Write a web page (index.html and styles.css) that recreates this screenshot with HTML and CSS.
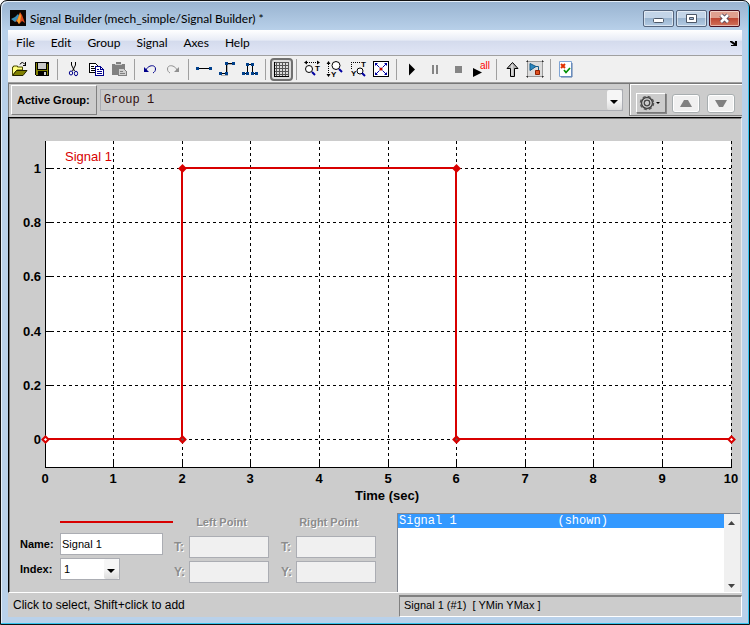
FILE: index.html
```html
<!DOCTYPE html>
<html lang="en">
<head>
    <meta charset="UTF-8">
    <meta name="viewport" content="width=device-width, initial-scale=1.0">
    <title>Signal Builder</title>
    <link rel="stylesheet" href="styles.css">
</head>
<body>
    <div class="window">
        <header class="titlebar">
            <svg class="app-icon" width="16" height="16" viewBox="0 0 16 16">
                <rect width="16" height="16" fill="#0a0604"/>
                <path d="M1 9l4-2 3-3 2 3-3 4-2 1z" fill="#3c8fb8"/>
                <path d="M5 12l3-4 2-6 2 3 3 8-3-2-3 3-2-3z" fill="#d8471a"/>
                <path d="M7 11l3-8 1 3-1 6-1 2z" fill="#f6a42c"/>
            </svg>
            <h1>Signal Builder (mech_simple/Signal Builder) *</h1>
            <div class="window-buttons">
                <button aria-label="Minimize"><svg width="29" height="15" viewBox="0 0 29 15"><rect x="9.500" y="7.500" width="10" height="4" rx="1" fill="#fff" stroke="#4c5767"/></svg></button>
                <button aria-label="Maximize"><svg width="29" height="15" viewBox="0 0 29 15"><path d="M9.500 3.500h10v8h-10z" fill="#fff" stroke="#4c5767"/><path d="M12.500 6.500h4v2h-4z" fill="#9fb9d5" stroke="#4c5767"/></svg></button>
                <button class="close" aria-label="Close"><svg width="29" height="15" viewBox="0 0 29 15"><path d="M11 4l7 7M18 4l-7 7" stroke="#564a5c" stroke-width="4.500"/><path d="M11 4l7 7M18 4l-7 7" stroke="#fff" stroke-width="2.600"/></svg></button>
            </div>
        </header>

        <nav class="menubar">
            <button>File</button>
            <button>Edit</button>
            <button>Group</button>
            <button>Signal</button>
            <button>Axes</button>
            <button>Help</button>
            <svg class="dock" width="7" height="6" viewBox="0 0 7 6"><path d="M0 1h2l3 2V1h2v5H1V5h3L0 2z" fill="#000"/></svg>
        </nav>

        <div class="toolbar">
            <button aria-label="Open">
                <svg viewBox="0 0 17 17">
                    <path d="M1.500 14V6h1V5h4v1h5v3H6l-4 5z" fill="#ffff80" stroke="#4b4b00"/>
                    <path d="M5.500 9.500H16l-4 5H1.500z" fill="#808000" stroke="#222200"/>
                    <path d="M9 3.500q2-4 5 0M14.500 1v3.500M12 4.500h3" fill="none" stroke="#000"/>
                </svg>
            </button>
            <button aria-label="Save">
                <svg viewBox="0 0 17 17" shape-rendering="crispEdges">
                    <path d="M1 1h14v14H2L1 14z" fill="#000"/>
                    <path d="M2 2h1v7h10V3h1v11H2z" fill="#808000"/>
                    <rect x="4" y="2" width="8" height="6" fill="#c8c8c8"/>
                    <rect x="4" y="10" width="9" height="4" fill="#000"/>
                    <rect x="10" y="11" width="2" height="3" fill="#d0d0d0"/>
                </svg>
            </button>
            <span class="sep"></span>
            <button aria-label="Cut">
                <svg viewBox="0 0 17 17">
                    <path d="M6.500 1v3l3 6M10.500 1v3l-3 6" fill="none" stroke="#000"/>
                    <ellipse cx="6" cy="12" rx="1.700" ry="2" fill="none" stroke="#00008b"/>
                    <ellipse cx="11" cy="12.500" rx="1.600" ry="2.300" fill="none" stroke="#00008b"/>
                </svg>
            </button>
            <button aria-label="Copy">
                <svg viewBox="0 0 17 17" shape-rendering="crispEdges">
                    <path d="M1.500 2.500h6l2 2v7h-8z" fill="#fff" stroke="#000"/>
                    <path d="M3 5.500h3M3 7.500h4M3 9.500h4" stroke="#000"/>
                    <path d="M7.500 5.500h5l3 3v6h-8z" fill="#fff" stroke="#00008b"/>
                    <path d="M12.500 5v3.500H16M9 8.500h2M9 10.500h5M9 12.500h5" fill="none" stroke="#00008b"/>
                </svg>
            </button>
            <button aria-label="Paste" disabled>
                <svg viewBox="0 0 17 17" shape-rendering="crispEdges">
                    <path d="M1 3h4V1h5v2h4v11H1z" fill="#808080"/>
                    <path d="M4 3.500h7" stroke="#c8c8c8"/>
                    <path d="M7.500 7.500h5l3 3v4h-8z" fill="#d0d0d0" stroke="#808080"/>
                    <path d="M9 10.500h3M9 12.500h5" stroke="#808080"/>
                </svg>
            </button>
            <span class="sep"></span>
            <button aria-label="Undo">
                <svg viewBox="0 0 17 17">
                    <path d="M4 9c2-5 9.500-6 9.500-1 0 2-1 3-2.500 4" fill="none" stroke="#00008b"/>
                    <path d="M2 6v5h5z" fill="#00008b"/>
                </svg>
            </button>
            <button aria-label="Redo" disabled>
                <svg viewBox="0 0 17 17">
                    <path d="M12 9C10 4 2.500 3 2.500 8c0 2 1 3 2.500 4" fill="none" stroke="#909090"/>
                    <path d="M14 6v5H9z" fill="#909090"/>
                </svg>
            </button>
            <span class="sep"></span>
            <button aria-label="Constant signal">
                <svg viewBox="0 0 17 17" shape-rendering="crispEdges">
                    <path d="M2 7.500h13" stroke="#000"/>
                    <path d="M0 6h3v3H0zM13 6h3v3h-3z" fill="#00408c"/>
                </svg>
            </button>
            <button aria-label="Step signal">
                <svg viewBox="0 0 17 17" shape-rendering="crispEdges">
                    <path d="M2 13.500h6.500v-11H15" transform="translate(0 1)" stroke="#b0b0b0" fill="none"/>
                    <path d="M2 12.500h5.500v-10H15" stroke="#000" fill="none"/>
                    <path d="M0 11h3v3H0zM6 11h3v3H6zM6 1h3v3H6zM13 1h3v3h-3z" fill="#00408c"/>
                </svg>
            </button>
            <button aria-label="Pulse signal">
                <svg viewBox="0 0 17 17" shape-rendering="crispEdges">
                    <path d="M1 12.500h4.500v-9h5v9H15" stroke="#000" fill="none"/>
                    <path d="M0 11h3v3H0zM4 11h3v3H4zM4 2h3v3H4zM9 2h3v3H9zM9 11h3v3H9zM13 11h3v3h-3z" fill="#00408c"/>
                </svg>
            </button>
            <span class="sep"></span>
            <button class="pressed" aria-label="Grid" aria-pressed="true">
                <svg viewBox="0 0 17 17" shape-rendering="crispEdges">
                    <path d="M1 1.500h15M1 4.500h15M1 7.500h15M1 10.500h15M1 13.500h15M3.500 1v14M6.500 1v14M9.500 1v14M12.500 1v14M15.500 1v14" stroke="#555"/>
                    <path d="M1.500 1v15M1 15.500h15" stroke="#000"/>
                </svg>
            </button>
            <span class="sep"></span>
            <button aria-label="Zoom T">
                <svg viewBox="0 0 17 17">
                    <path d="M3 1.500h10" stroke="#000" stroke-dasharray="1 1"/>
                    <path d="M0 1.500l3-2v4zM16 1.500l-3-2v4z" fill="#000"/>
                    <circle cx="5" cy="8" r="3.500" fill="#fff" stroke="#000"/>
                    <path d="M8 11l3 3" stroke="#0000a0" stroke-width="2"/>
                    <text x="11" y="10" class="axis-letter">T</text>
                </svg>
            </button>
            <button aria-label="Zoom Y">
                <svg viewBox="0 0 17 17">
                    <path d="M1.500 3v10" stroke="#000" stroke-dasharray="1 1"/>
                    <path d="M1.500 0l-2 3h4zM1.500 16l-2-3h4z" fill="#000"/>
                    <circle cx="9" cy="4.500" r="4" fill="#fff" stroke="#000"/>
                    <path d="M12 8l3 3" stroke="#0000a0" stroke-width="2"/>
                    <text x="4" y="16" class="axis-letter">Y</text>
                </svg>
            </button>
            <button aria-label="Zoom T and Y">
                <svg viewBox="0 0 17 17">
                    <path d="M1 1.500h10M1.500 1v8" stroke="#000" stroke-dasharray="1 1" fill="none"/>
                    <circle cx="10" cy="10" r="3" fill="#fff" stroke="#000"/>
                    <path d="M12 12l3 3" stroke="#0000a0" stroke-width="2"/>
                    <text x="11" y="6" class="axis-letter">T</text>
                    <text x="1" y="15" class="axis-letter">Y</text>
                </svg>
            </button>
            <button aria-label="Fit view">
                <svg viewBox="0 0 17 17">
                    <path d="M.5.5h15v15H.5z" fill="#fff" stroke="#000" shape-rendering="crispEdges"/>
                    <path d="M3 3l3.500 3.500M13 3L9.500 6.500M3 13l3.500-3.500M13 13L9.500 9.500" stroke="#0000a0"/>
                    <path d="M2 2h3L2 5zM14 2v3l-3-3zM2 14v-3l3 3zM14 14h-3l3-3z" fill="#0000a0"/>
                    <circle cx="8" cy="8" r="1.600" fill="#c00000"/>
                </svg>
            </button>
            <span class="sep"></span>
            <button aria-label="Start">
                <svg viewBox="0 0 17 17"><path d="M5 2.500l6 6-6 6z" fill="#000"/></svg>
            </button>
            <button aria-label="Pause" disabled>
                <svg viewBox="0 0 17 17"><path d="M5 4h2v9H5zM9 4h2v9H9z" fill="#858585"/></svg>
            </button>
            <button aria-label="Stop" disabled>
                <svg viewBox="0 0 17 17"><path d="M5 5h7v7H5z" fill="#858585"/></svg>
            </button>
            <button aria-label="Run all">
                <svg viewBox="0 0 17 17">
                    <path d="M0 7l9 4.500L0 16z" fill="#000"/>
                    <text x="7" y="8" class="all-text">all</text>
                </svg>
            </button>
            <span class="sep"></span>
            <button aria-label="Up to parent">
                <svg viewBox="0 0 17 17">
                    <path d="M8.500 1.500l5.500 6h-3.500v8h-4v-8H3z" fill="#b8b8b8" stroke="#000"/>
                    <path d="M8 3.500v11" stroke="#f4f4f4"/>
                </svg>
            </button>
            <button aria-label="Simulink model">
                <svg viewBox="0 0 17 17">
                    <path d="M.5.5h15v15H.5z" fill="#dcdcdc" stroke="#999"/>
                    <path d="M0 1V0h1M15 0h1v1M0 15v1h1M15 16h1v-1" stroke="#000" fill="none"/>
                    <path d="M3 2.500l6 3-6 4z" fill="#2a87c0" stroke="#145a88"/>
                    <path d="M9 5.500h2.500V9" stroke="#145a88" fill="none"/>
                    <path d="M8.500 9.500h4v4h-4z" fill="#e05020" stroke="#902000"/>
                </svg>
            </button>
            <span class="sep"></span>
            <button aria-label="Verification settings">
                <svg viewBox="0 0 17 17">
                    <path d="M1.500.5h12v15h-12z" fill="#fff" stroke="#7fa4d4"/>
                    <path d="M14 2v14H3" stroke="#5577a8" fill="none"/>
                    <path d="M3 3l4 4M7 3L3 7" stroke="#e03000" stroke-width="2"/>
                    <path d="M6 9l2 2.500L12 7" stroke="#009000" stroke-width="1.700" fill="none"/>
                </svg>
            </button>
        </div>

        <div class="groupbar">
            <label class="group-label" for="group">Active Group:</label>
            <div class="combo group-combo">
                <select id="group"><option>Group 1</option></select>
            </div>
            <div class="group-tools">
                <button class="gear" aria-label="Group options">
                    <svg width="26" height="18" viewBox="0 0 26 18">
                        <circle cx="10" cy="9" r="5.500" fill="#ddd" stroke="#444" stroke-width="1.500"/>
                        <circle cx="10" cy="9" r="6.500" fill="none" stroke="#555" stroke-width="1.500" stroke-dasharray="3 2.100"/>
                        <circle cx="10" cy="9" r="2.800" fill="#ccc" stroke="#444" stroke-width="1.300"/>
                        <path d="M19 8h4l-2 2z" fill="#000"/>
                    </svg>
                </button>
                <button class="move" aria-label="Move group up" disabled><svg width="12" height="7" viewBox="0 0 12 7"><path d="M4 0h4l4 7H0z" fill="#808080"/></svg></button>
                <button class="move" aria-label="Move group down" disabled><svg width="12" height="7" viewBox="0 0 12 7"><path d="M0 0h12L8 7H4z" fill="#808080"/></svg></button>
            </div>
        </div>

        <main class="workspace">
            <svg class="chart" viewBox="0 0 730 394" role="img" aria-label="Signal 1 over time">
                <rect x="35" y="22" width="686" height="326" fill="#fff"/>
                <g class="grid">
                    <path d="M103.500 22v326M172.500 22v326M240.500 22v326M309.500 22v326M378.500 22v326M446.500 22v326M515.500 22v326M583.500 22v326M652.500 22v326M721.500 22v326"/>
                    <path d="M35 49.500h686M35 103.500h686M35 157.500h686M35 212.500h686M35 266.500h686M35 320.500h686"/>
                </g>
                <g class="axes">
                    <path d="M35.500 22v326.500H722"/>
                    <path d="M103.500 348v-7M172.500 348v-7M240.500 348v-7M309.500 348v-7M378.500 348v-7M446.500 348v-7M515.500 348v-7M583.500 348v-7M652.500 348v-7M721.500 348v-7"/>
                    <path d="M35 49.500h7M35 103.500h7M35 157.500h7M35 212.500h7M35 266.500h7M35 320.500h7"/>
                </g>
                <path class="signal" d="M35 320h137V49h274v271h275"/>
                <g class="points">
                    <path d="M35.500 317.500l3 3-3 3-3-3z" fill="#fff"/>
                    <path d="M172.500 317.500l3 3-3 3-3-3z" fill="#844"/>
                    <path d="M172.500 46.500l3 3-3 3-3-3z" fill="#d80000"/>
                    <path d="M446.500 46.500l3 3-3 3-3-3z" fill="#d80000"/>
                    <path d="M446.500 317.500l3 3-3 3-3-3z" fill="#844"/>
                    <path d="M721.500 317.500l3 3-3 3-3-3z" fill="#fff"/>
                </g>
                <text class="signal-name" x="55" y="42">Signal 1</text>
                <g class="ticks-y">
                    <text x="31" y="54">1</text>
                    <text x="31" y="108">0.8</text>
                    <text x="31" y="162">0.6</text>
                    <text x="31" y="217">0.4</text>
                    <text x="31" y="271">0.2</text>
                    <text x="31" y="325">0</text>
                </g>
                <g class="ticks-x">
                    <text x="35" y="364">0</text>
                    <text x="103" y="364">1</text>
                    <text x="172" y="364">2</text>
                    <text x="240" y="364">3</text>
                    <text x="309" y="364">4</text>
                    <text x="378" y="364">5</text>
                    <text x="446" y="364">6</text>
                    <text x="515" y="364">7</text>
                    <text x="583" y="364">8</text>
                    <text x="652" y="364">9</text>
                    <text x="721" y="364">10</text>
                    <text x="377" y="381">Time (sec)</text>
                </g>
            </svg>

            <div class="editor">
                <form class="signal-form">
                    <div class="line-sample"></div>
                    <label for="name">Name:</label>
                    <input id="name" type="text" value="Signal 1">
                    <label for="index">Index:</label>
                    <div class="combo index-combo">
                        <select id="index"><option>1</option></select>
                    </div>
                </form>
                <fieldset class="point" disabled>
                    <legend>Left Point</legend>
                    <label for="left-t">T:</label>
                    <input id="left-t" type="text">
                    <label for="left-y">Y:</label>
                    <input id="left-y" type="text">
                </fieldset>
                <fieldset class="point" disabled>
                    <legend>Right Point</legend>
                    <label for="right-t">T:</label>
                    <input id="right-t" type="text">
                    <label for="right-y">Y:</label>
                    <input id="right-y" type="text">
                </fieldset>
                <div class="signal-list">
                    <select size="4" aria-label="Signals">
                        <option selected>Signal 1&nbsp;&nbsp;&nbsp;&nbsp;&nbsp;&nbsp;&nbsp;&nbsp;&nbsp;&nbsp;&nbsp;&nbsp;&nbsp;&nbsp;(shown)</option>
                    </select>
                    <div class="scroll">
                        <button aria-label="Scroll up"><svg width="7" height="4" viewBox="0 0 7 4"><path d="M3.500 0L7 4H0z" fill="#444"/></svg></button>
                        <button aria-label="Scroll down"><svg width="7" height="4" viewBox="0 0 7 4"><path d="M3.500 4L0 0h7z" fill="#444"/></svg></button>
                    </div>
                </div>
            </div>
        </main>

        <footer class="statusbar">
            <div class="hint">Click to select, Shift+click to add</div>
            <div class="range">Signal 1 (#1)&nbsp; [ YMin YMax ]</div>
        </footer>
    </div>
</body>
</html>
```
FILE: styles.css
```css
* {
    box-sizing: border-box;
}
body {
    margin: 0;
    background-color: #fff;
    font-family: "Liberation Sans", Arial, sans-serif;
    font-size: 12px;
    color: #000;
}
button {
    padding: 0;
    border: none;
    background: none;
    font: inherit;
    color: inherit;
}
svg {
    display: block;
}
.window {
    display: flex;
    flex-direction: column;
    min-height: 100vh;
    padding: 0 7px 7px;
    border: 1px solid #111;
    border-radius: 7px 7px 0 0;
    background: linear-gradient(#98b3d0, #b9d1ea 30px);
    box-shadow: inset -1px -1px #35c4ee, inset 1px 1px #e4eef8;
}

/* title bar */
.titlebar {
    display: flex;
    align-items: flex-start;
    height: 29px;
    padding: 9px 2px 0;
}
.titlebar h1 {
    flex: 1;
    margin: 0 0 0 4px;
    font-family: Lato, "Open Sans", sans-serif;
    font-size: 12px;
    font-weight: normal;
    line-height: 18px;
}
.window-buttons {
    display: flex;
    gap: 2px;
}
.window-buttons button {
    width: 31px;
    height: 17px;
    border: 1px solid #55657d;
    border-radius: 2px;
    background: linear-gradient(#c3d5e8 50%, #9ab5d0 50%, #b4cbe3);
    box-shadow: inset 0 0 0 1px rgba(255, 255, 255, 0.5);
}
.window-buttons .close {
    border-color: #4a1020;
    background: linear-gradient(#e0a08f 45%, #bd4430 45%, #d0705a);
}

/* menu */
.menubar {
    display: flex;
    align-items: center;
    height: 26px;
    border-bottom: 1px solid #a0a0a0;
    background: linear-gradient(#fff, #e8ecf6 40%, #d4dbed 45%, #e1e6f6);
    font-family: Lato, "Open Sans", sans-serif;
}
.menubar button {
    padding: 0 8px;
}
.dock {
    margin: 0 5px 0 auto;
}

/* toolbar */
.toolbar {
    display: flex;
    align-items: center;
    height: 27px;
    border-bottom: 1px solid #a0a0a0;
    background-color: #f0f0f0;
}
.toolbar button {
    width: 23px;
    height: 23px;
    padding: 3px;
}
.toolbar svg {
    width: 17px;
    height: 17px;
    overflow: visible;
}
.toolbar .pressed {
    border: 2px solid #707070;
    border-radius: 4px;
    padding: 1px;
    background-color: #ddd;
}
.sep {
    width: 8px;
    height: 21px;
    background: linear-gradient(#a0a0a0, #a0a0a0) 3px 0 / 1px 100% no-repeat;
}
.axis-letter {
    font-size: 8px;
    font-weight: bold;
}
.all-text {
    font-size: 10px;
    fill: #f00;
}

/* group bar */
.groupbar {
    display: flex;
    height: 34px;
    border-top: 1px solid #777;
    border-left: 1px solid #777;
    background-color: #ccc;
}
.group-label {
    height: 30px;
    margin: 1px 3px 0 2px;
    padding: 0 6px 0 5px;
    border: 1px solid #fff;
    border-right-color: #808080;
    border-bottom-color: #808080;
    font-size: 11px;
    font-weight: bold;
    line-height: 29px;
}
.combo {
    position: relative;
    border: 1px solid #abadb3;
}
.combo select {
    display: block;
    width: 100%;
    height: 100%;
    padding: 0 18px 0 3px;
    border: none;
    background: none;
    appearance: none;
    font: inherit;
    color: inherit;
}
.combo::before,
.combo::after {
    content: "";
    position: absolute;
    pointer-events: none;
}
.combo::before {
    top: 0;
    right: 0;
    bottom: 0;
    width: 15px;
    border-radius: 2px;
    background: linear-gradient(#f6f6f6 50%, #dcdcdc);
}
.combo::after {
    top: 50%;
    right: 4px;
    border: 4px solid transparent;
    border-top-color: #000;
    border-bottom: none;
}
.group-combo {
    flex: 1;
    height: 22px;
    margin-top: 5px;
    color: #301010;
    font-family: "Liberation Mono", "Courier New", monospace;
    font-size: 12px;
}
.group-tools {
    display: flex;
    align-items: center;
    gap: 6px;
    height: 32px;
    margin-left: 6px;
    padding: 7px 7px 0 6px;
    border-left: 1px solid #808080;
    box-shadow: inset 1px 1px #fff;
    border-bottom: 1px solid #808080;
}
.gear {
    width: 30px;
    height: 20px;
    border: 1px solid #fff;
    border-right-color: #777;
    border-bottom-color: #777;
    box-shadow: 1px 1px #888;
}
.move {
    display: flex;
    align-items: center;
    justify-content: center;
    width: 28px;
    height: 19px;
    border: 1px solid #a8aeb0;
    border-radius: 3px;
    background-color: #f0f0f0;
    box-shadow: inset 0 0 0 1px #fff;
}
.move + .move {
    margin-left: 1px;
}

/* chart */
.workspace {
    display: flex;
    flex: 1;
    flex-direction: column;
    justify-content: space-between;
    padding: 1px 1px 0;
    border: 1px solid #000;
    border-right-color: #e8e8e8;
    border-bottom-color: #fff;
    box-shadow: inset 1px 1px #777;
    background-color: #ccc;
}
.chart {
    width: 100%;
    height: auto;
}
.grid path {
    stroke: #000;
    stroke-dasharray: 3 3;
    fill: none;
    shape-rendering: crispEdges;
}
.axes path {
    stroke: #000;
    fill: none;
    shape-rendering: crispEdges;
}
.signal {
    stroke: #d80000;
    stroke-width: 2;
    fill: none;
    shape-rendering: crispEdges;
}
.points path {
    stroke: #d80000;
    stroke-width: 2;
}
.signal-name {
    font-size: 13px;
    fill: #d80000;
}
.ticks-x text,
.ticks-y text {
    font-size: 13px;
    font-weight: bold;
    text-anchor: middle;
}
.ticks-y text {
    text-anchor: end;
}

/* signal editor */
.editor {
    display: flex;
    padding-left: 10px;
}
.signal-form {
    display: grid;
    grid-template-columns: 40px 103px;
    grid-template-rows: 17px 22px 22px;
    row-gap: 3px;
    align-items: center;
    align-content: start;
    margin-right: 11px;
    font-size: 11px;
}
.signal-form label {
    font-weight: bold;
}
.line-sample {
    grid-column: 2;
    width: 113px;
    height: 2px;
    background-color: #d80000;
}
.signal-form input,
.point input {
    width: 100%;
    height: 22px;
    padding: 0 1px;
    border: 1px solid #abadb3;
    background-color: #fff;
    font: inherit;
}
.index-combo {
    width: 60px;
    height: 22px;
    background-color: #fff;
}
.point {
    display: grid;
    grid-template-columns: 15px 80px;
    grid-auto-rows: 22px;
    row-gap: 3px;
    align-items: center;
    min-width: 0;
    margin: 0 12px 0 0;
    padding: 4px 0 0;
    border: none;
    color: #8c8c8c;
    font-weight: bold;
    text-shadow: 1px 1px #fff;
}
.point legend {
    width: 95px;
    padding: 0;
    font-size: 11px;
    line-height: 19px;
    text-align: center;
}
.point input {
    background-color: #f0f0f0;
}
.point + .point {
    margin-right: 21px;
}
.signal-list {
    display: flex;
    flex: 1;
    height: 79px;
    border-top: 1px solid #828790;
    border-left: 1px solid #828790;
    background-color: #fff;
}
.signal-list select {
    flex: 1;
    min-width: 0;
    padding: 0;
    border: none;
    border-radius: 0;
    outline: none;
    background-color: #fff;
    font-family: "Liberation Mono", "Courier New", monospace;
    font-size: 12px;
    overflow: hidden;
}
.signal-list option {
    min-height: 13px;
    padding: 0 1px;
    line-height: 13px;
}
.signal-list option:checked {
    background: linear-gradient(#3399ff, #3399ff);
    -webkit-text-fill-color: #fff;
}
.scroll {
    display: flex;
    flex-direction: column;
    justify-content: space-between;
    width: 16px;
    padding: 7px 4px 4px;
    background-color: #f0f0f0;
}

/* status bar */
.statusbar {
    display: flex;
    height: 24px;
    background-color: #ccc;
}
.hint {
    width: 391px;
    padding-left: 5px;
    line-height: 24px;
}
.range {
    flex: 1;
    margin-top: 2px;
    padding-left: 4px;
    border: 1px solid #808080;
    border-top-width: 2px;
    border-right-color: #fff;
    border-bottom-color: #fff;
    font-size: 11px;
    line-height: 17px;
}
```
